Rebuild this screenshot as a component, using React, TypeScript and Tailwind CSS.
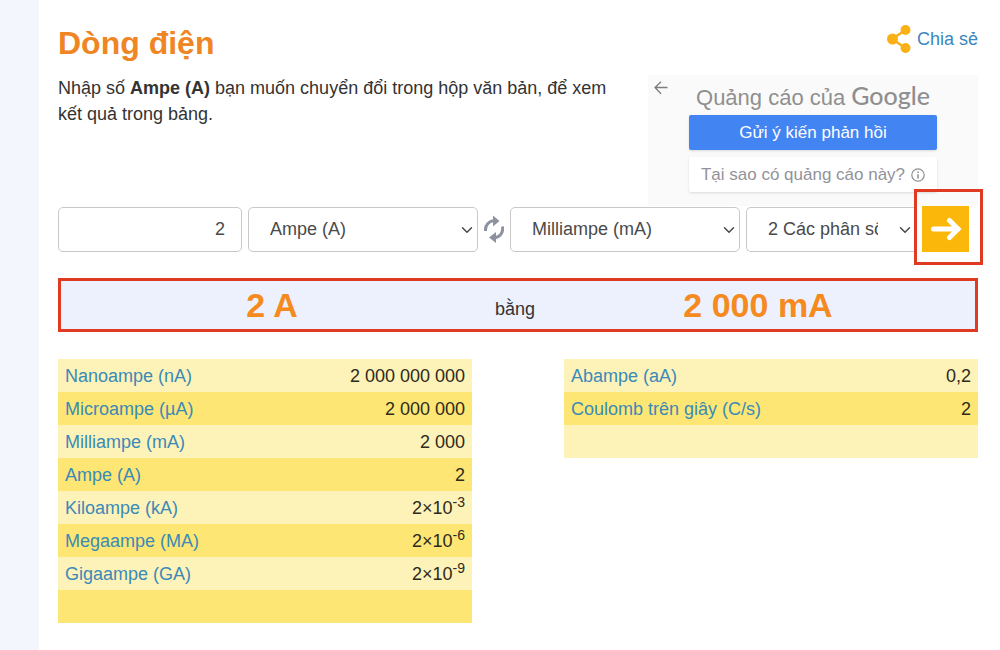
import React from "react";
import { ChevronDown } from "lucide-react";

type Row = {
  name: string;
  value: string;
  exponent?: string;
};

const leftRows: Row[] = [
  { name: "Nanoampe (nA)", value: "2 000 000 000" },
  { name: "Microampe (µA)", value: "2 000 000" },
  { name: "Milliampe (mA)", value: "2 000" },
  { name: "Ampe (A)", value: "2" },
  { name: "Kiloampe (kA)", value: "2×10", exponent: "-3" },
  { name: "Megaampe (MA)", value: "2×10", exponent: "-6" },
  { name: "Gigaampe (GA)", value: "2×10", exponent: "-9" },
  { name: "", value: "" },
];

const rightRows: Row[] = [
  { name: "Abampe (aA)", value: "0,2" },
  { name: "Coulomb trên giây (C/s)", value: "2" },
  { name: "", value: "" },
];

const selectClass =
  "block h-[45px] w-full appearance-none border border-[#c9c9c9] bg-white pl-[21px] pr-[36px] text-[18px] text-[#4a4a4a]";

const UnitTable = ({ rows }: { rows: Row[] }) => {
  return (
    <table className="w-full border-collapse text-[18px] leading-[24px]">
      <tbody>
        {rows.map((row, i) => (
          <tr key={i} className="h-[33px] odd:bg-[#fdf2b8] even:bg-[#fde673]">
            <td className="px-[7px] py-0">
              {row.name && (
                <a href="#" className="text-[#3a8ab8]">
                  {row.name}
                </a>
              )}
            </td>
            <td className="px-[7px] py-0 text-right text-[#2e2a1c]">
              {row.value}
              {row.exponent && <sup className="text-[14px]">{row.exponent}</sup>}
            </td>
          </tr>
        ))}
      </tbody>
    </table>
  );
};

const App = () => {
  return (
    <div className="flex min-h-screen bg-white font-['Liberation_Sans',Arial,sans-serif] text-[18px] text-[#333333]">
      <div className="w-[39px] shrink-0 bg-[#f3f6fc]" />

      <main className="min-w-0 flex-1 pl-[19px] pr-[22px]">
        {/* Title */}
        <div className="flex h-[75px] items-start justify-between pt-6">
          <h1 className="text-[32px] font-bold leading-[38px] text-[#f08523]">Dòng điện</h1>
          <a href="#" className="flex items-center gap-1.5 leading-[30px] text-[#3a87be]">
            <svg width="24" height="28" viewBox="0 0 24 28" fill="#f9b116" aria-hidden="true">
              <path d="M18.500 5 L5 14 L18.500 23" fill="none" stroke="#f9b116" strokeWidth="2.500" />
              <circle cx="5.500" cy="14" r="5.500" />
              <circle cx="18.500" cy="5" r="5" />
              <circle cx="18.500" cy="23" r="5" />
            </svg>
            Chia sẻ
          </a>
        </div>

        <div className="flex">
          <p className="min-w-0 flex-1 pr-5 leading-[26px]">
            Nhập số <b>Ampe (A)</b> bạn muốn chuyển đổi trong hộp văn bản, để xem kết quả trong
            bảng.
          </p>

          {/* Ad */}
          <div className="relative h-[131px] w-[330px] shrink-0 bg-[#fafafa] px-[41px]">
            <button type="button" aria-label="Quay lại" className="absolute left-1.5 top-1.5">
              <svg width="14" height="14" viewBox="0 0 14 14" fill="none" stroke="#7d7d7d" strokeWidth="1.300" aria-hidden="true">
                <path d="M13.500 6.500H1M7 0.700L1 6.500L7 12.700" />
              </svg>
            </button>
            <div className="flex h-10 items-baseline justify-center gap-1.5 whitespace-nowrap pt-1 text-[22px] leading-[32px] text-[#8f8f8f]">
              <span>Quảng cáo của</span>
              <span className="font-['Lato',sans-serif] text-[25px] font-medium">Google</span>
            </div>
            <button type="button" className="block h-[35px] w-full rounded-[2px] bg-[#4384f3] text-[17px] text-white shadow">
              Gửi ý kiến phản hồi
            </button>
            <button type="button" className="mt-[7px] flex h-[35px] w-full items-center justify-center gap-1.5 whitespace-nowrap rounded-[2px] bg-white text-[17px] text-[#92929a] shadow">
              Tại sao có quảng cáo này?
              <svg width="14" height="14" viewBox="0 0 14 14" fill="none" stroke="#8f8f8f" strokeWidth="1.200" aria-hidden="true">
                <circle cx="7" cy="7" r="6.200" />
                <path d="M7 6.200V10.500M7 3.500V5" strokeWidth="1.500" />
              </svg>
            </button>
          </div>
        </div>

        {/* Converter */}
        <form className="flex items-center gap-1.5 pr-[9px]" onSubmit={(e) => e.preventDefault()}>
          <div className="w-0 flex-[184]">
            <input
              type="text"
              aria-label="Giá trị"
              defaultValue="2"
              className="block h-[45px] w-full rounded-[5px] border border-[#c9c9c9] bg-white px-4 text-right text-[18px] text-[#4a4a4a]"
            />
          </div>
          <div className="relative w-0 flex-[230]">
            <select aria-label="Từ" className={`${selectClass} rounded-[5px]`}>
              <option>Ampe (A)</option>
            </select>
            <ChevronDown size={18} strokeWidth={2} className="pointer-events-none absolute right-0.5 top-3.5 text-[#4a4a4a]" />
          </div>
          <button type="button" aria-label="Đổi chiều" className="w-5 shrink-0">
            <svg width="20" height="28" viewBox="0 0 20 28" aria-hidden="true">
              <path d="M1.500 16C1 10 5 6 10 5.500" fill="none" stroke="#8d92a0" strokeWidth="3" />
              <path d="M9 0.500L15.500 6L9 11.500Z" fill="#8d92a0" />
              <path d="M18.500 11.500C19.500 17.500 16 22 11 22.500" fill="none" stroke="#8d92a0" strokeWidth="3" />
              <path d="M12 17L5 22.500L12 28Z" fill="#8d92a0" />
            </svg>
          </button>
          <div className="relative w-0 flex-[230]">
            <select aria-label="Sang" className={`${selectClass} rounded-[5px]`}>
              <option>Milliampe (mA)</option>
            </select>
            <ChevronDown size={18} strokeWidth={2} className="pointer-events-none absolute right-0.5 top-3.5 text-[#4a4a4a]" />
          </div>
          <div className="relative mr-0.5 w-0 flex-[168]">
            <select aria-label="Độ chính xác" className={`${selectClass} rounded-l-[5px] border-r-0`}>
              <option>2 Các phân số thập phân</option>
            </select>
            <ChevronDown size={18} strokeWidth={2} className="pointer-events-none absolute right-0 top-3.5 text-[#4a4a4a]" />
          </div>
          <div className="relative shrink-0">
            <button type="submit" aria-label="Chuyển đổi" className="flex h-[46px] w-[47px] items-center justify-center bg-[#fbb80b]">
              <svg width="32" height="24" viewBox="0 0 32 24" fill="none" stroke="#ffffff" strokeWidth="5" strokeLinecap="round" aria-hidden="true">
                <path d="M3.500 12H28M19.500 3.500L28 12L19.500 20.500" />
              </svg>
            </button>
            <span className="pointer-events-none absolute -bottom-[13px] -left-2 -right-[14px] -top-[17px] border-[3px] border-[#e03a22]" />
          </div>
        </form>

        {/* Result */}
        <div className="mt-[26px] flex h-[54px] items-center border-[3px] border-[#e03a22] bg-[#ecf1fd] pr-1.5 text-center">
          <div className="flex-1 text-[34px] font-bold leading-[48px] text-[#f58a1f]">2 A</div>
          <div className="px-3 pt-2">bằng</div>
          <div className="flex-1 text-[34px] font-bold leading-[48px] text-[#f58a1f]">2 000 mA</div>
        </div>

        {/* Other units */}
        <div className="mt-[27px] grid grid-cols-2 items-start gap-[92px]">
          <UnitTable rows={leftRows} />
          <UnitTable rows={rightRows} />
        </div>
      </main>
    </div>
  );
};

export default App;
